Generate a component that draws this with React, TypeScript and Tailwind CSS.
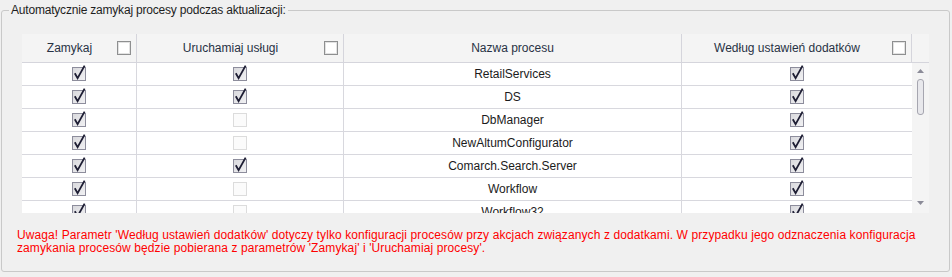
import React from "react";

type Kind = "checked" | "disabled" | "header";

function Box({ kind }: { kind: Kind }) {
  if (kind === "checked") {
    return (
      <svg width="15" height="16" viewBox="0 0 15 16" className="block">
        <defs>
          <linearGradient id="cbg" x1="0" y1="0" x2="1" y2="1">
            <stop offset="0" stopColor="#d8d8dc" />
            <stop offset="1" stopColor="#f2f2f4" />
          </linearGradient>
        </defs>
        <rect x="0.5" y="2.5" width="13" height="13" fill="url(#cbg)" stroke="#8d8d9c" />
        <path d="M2.8 8.2 L5.6 13.2 L12.6 0.6" fill="none" stroke="#1d1d33" strokeWidth="1.8" strokeLinejoin="miter" />
      </svg>
    );
  }
  if (kind === "disabled") {
    return (
      <svg width="15" height="16" viewBox="0 0 15 16" className="block">
        <rect x="0.5" y="2.5" width="13" height="13" fill="#fbfbfb" stroke="#dcdcdc" />
      </svg>
    );
  }
  return (
    <svg width="14" height="14" viewBox="0 0 14 14" className="block">
      <rect x="0.5" y="0.5" width="13" height="13" fill="#ffffff" stroke="#8e8f90" />
      <rect x="1.5" y="1.5" width="11" height="11" fill="#ffffff" stroke="#e2e2e2" />
    </svg>
  );
}

const rows: { name: string; z: boolean; u: boolean; w: boolean }[] = [
  { name: "RetailServices", z: true, u: true, w: true },
  { name: "DS", z: true, u: true, w: true },
  { name: "DbManager", z: true, u: false, w: true },
  { name: "NewAltumConfigurator", z: true, u: false, w: true },
  { name: "Comarch.Search.Server", z: true, u: true, w: true },
  { name: "Workflow", z: true, u: false, w: true },
  { name: "Workflow32", z: true, u: false, w: true },
];

function HeaderCell({ w, label, check }: { w: string; label: string; check?: boolean }) {
  return (
    <div className={`${w} flex items-center border-r border-[#d5d5dc] shrink-0`}>
      <div className="flex-1 text-center">{label}</div>
      {check && (
        <div className="mr-[5px]">
          <Box kind="header" />
        </div>
      )}
    </div>
  );
}

export default function App() {
  return (
    <div
      className="w-[952px] h-[277px] bg-[#f0f0f0] pt-[2px] overflow-hidden text-[12px]"
      style={{ fontFamily: '"Liberation Sans", Arial, sans-serif' }}
    >
      <fieldset className="ml-[1px] w-[949px] h-[270px] border border-[#c9c9c9] rounded-[3px] p-0 m-0 box-border">
        <legend className="ml-[7px] px-[2px] leading-[16px] text-[#1e1e1e] tracking-[-0.2px]">
          Automatycznie zamykaj procesy podczas aktualizacji:
        </legend>
        <div className="pt-[16px]">
          <div className="ml-[20px] w-[907px] h-[179px] flex flex-col">
            <div className="h-[29px] flex border-b border-[#d5d5dc] bg-[#f4f4f4] text-[#283244]">
              <HeaderCell w="w-[115px]" label="Zamykaj" check />
              <HeaderCell w="w-[207px]" label="Uruchamiaj usługi" check />
              <HeaderCell w="w-[338px]" label="Nazwa procesu" />
              <HeaderCell w="w-[230px]" label="Według ustawień dodatków" check />
              <div className="w-[17px]" />
            </div>
            <div className="h-[150px] flex overflow-hidden">
              <div className="w-[890px] bg-white text-[#1b1b1b]">
                {rows.map((r) => (
                  <div key={r.name} className="h-[23px] flex border-b border-[#d8d8de]">
                    <div className="w-[115px] shrink-0 border-r border-[#d8d8de] flex items-center justify-center">
                      <div className="-mt-[3px] -mr-[1px]">
                        <Box kind={r.z ? "checked" : "disabled"} />
                      </div>
                    </div>
                    <div className="w-[207px] shrink-0 border-r border-[#d8d8de] flex items-center justify-center">
                      <div className="-mt-[3px] -mr-[1px]">
                        <Box kind={r.u ? "checked" : "disabled"} />
                      </div>
                    </div>
                    <div className="w-[338px] shrink-0 border-r border-[#d8d8de] flex items-center justify-center">
                      {r.name}
                    </div>
                    <div className="w-[230px] shrink-0 flex items-center justify-center">
                      <div className="-mt-[3px] -mr-[1px]">
                        <Box kind={r.w ? "checked" : "disabled"} />
                      </div>
                    </div>
                  </div>
                ))}
              </div>
              <div className="w-[17px] bg-[#f4f4f4] flex flex-col items-center">
                <svg width="7" height="4" viewBox="0 0 7 4" className="mt-[6px]">
                  <path d="M0 4 L3.5 0 L7 4 Z" fill="#8b8b98" />
                </svg>
                <div className="mt-[6px] w-[7px] h-[36px] rounded-[3px] border border-[#a6a6b0] bg-[#e8e8ec]" />
                <div className="flex-1" />
                <svg width="7" height="4" viewBox="0 0 7 4" className="mb-[8px]">
                  <path d="M0 0 L7 0 L3.5 4 Z" fill="#8b8b98" />
                </svg>
              </div>
            </div>
          </div>
          <div className="ml-[15px] mt-[16px] leading-[13px] text-[#ff0000] whitespace-nowrap tracking-[0.1px]">
            <div>
              Uwaga! Parametr 'Według ustawień dodatków' dotyczy tylko konfiguracji procesów przy akcjach związanych z dodatkami. W przypadku jego odznaczenia konfiguracja
            </div>
            <div>zamykania procesów będzie pobierana z parametrów 'Zamykaj' i 'Uruchamiaj procesy'.</div>
          </div>
        </div>
      </fieldset>
    </div>
  );
}
